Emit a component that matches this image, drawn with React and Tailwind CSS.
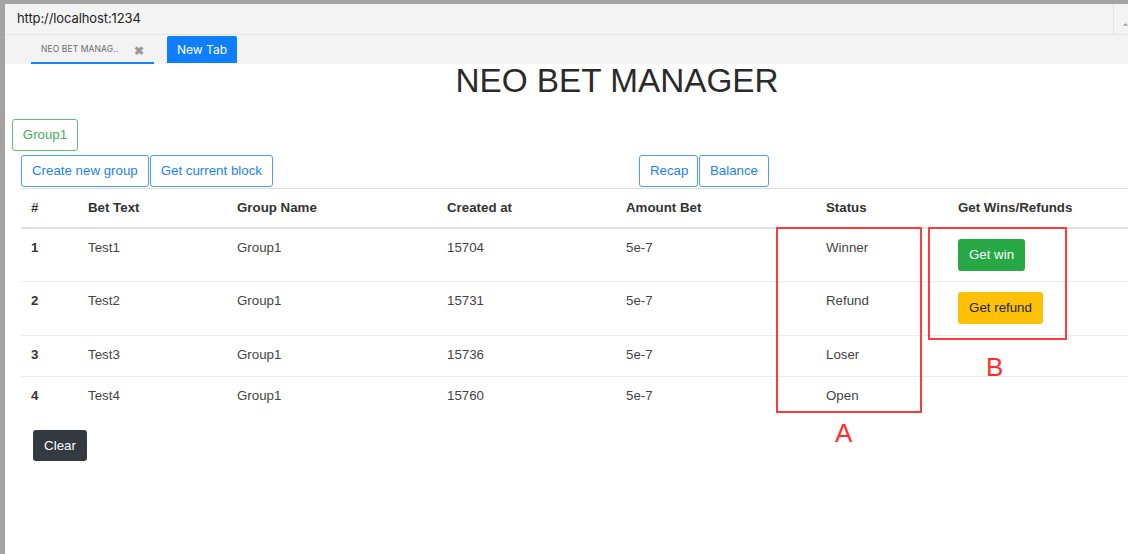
import React from "react";

const rows = [
  { n: 1, text: "Test1", group: "Group1", created: "15704", amount: "5e-7", status: "Winner", action: "win" },
  { n: 2, text: "Test2", group: "Group1", created: "15731", amount: "5e-7", status: "Refund", action: "refund" },
  { n: 3, text: "Test3", group: "Group1", created: "15736", amount: "5e-7", status: "Loser", action: null },
  { n: 4, text: "Test4", group: "Group1", created: "15760", amount: "5e-7", status: "Open", action: null },
];

const outlineBlue =
  "h-[32px] px-[10px] border border-[#4a9dff] text-[#1a82fb] rounded-[3px] bg-white text-[13.3px] leading-[20px]";

export default function App() {
  return (
    <div
      className="relative w-[1128px] h-[554px] overflow-hidden bg-white border-t-[4px] border-l-[5px] border-[#a3a3a3]"
      style={{ fontFamily: '"Liberation Sans", Arial, sans-serif' }}
    >
      {/* address bar */}
      <div
        className="flex items-center h-[31px] bg-[#f3f3f3] border-b border-[#e4e4e4] pl-[12px]"
        style={{ fontFamily: "Inter, sans-serif" }}
      >
        <span className="text-[13px] text-[#222] tracking-[-0.1px]">http://localhost:1234</span>
        <div className="ml-auto h-full w-[15px] border-l border-[#e2e2e2] flex items-center justify-end">
          <span className="text-[11px] text-[#777]">&#x2038;</span>
        </div>
      </div>
      {/* tab bar */}
      <div
        className="flex items-end h-[29px] bg-[#f3f3f3] pl-[26px]"
        style={{ fontFamily: "Inter, sans-serif" }}
      >
        <div className="relative w-[123px] h-[28px] flex items-center pl-[10px] border-b-[2px] border-[#1581ff]">
          <span className="text-[8.5px] text-[#6c6c6c] tracking-[0.1px]">NEO BET MANAG..</span>
          <span className="absolute left-[103px] top-[6px] text-[12px] font-bold text-[#9a9a9a]">&#x2716;</span>
        </div>
        <div className="ml-[13px] mb-[1px] w-[70px] h-[27px] bg-[#0f7efc] rounded-t-[2px] flex items-center justify-center text-white text-[12px]">
          New Tab
        </div>
      </div>

      {/* page */}
      <div className="w-[1224px] text-[#212529]">
        <h1 className="pt-[2px] text-center text-[33.3px] leading-[30px] font-normal text-[#2a2a2a]">NEO BET MANAGER</h1>
        <div className="mt-[23px] ml-[7px]">
          <button className="h-[32px] w-[66px] border border-[#62c075] text-[#45ad5c] rounded-[3px] text-[13.3px]">
            Group1
          </button>
        </div>
        <div className="mt-[4px] ml-[16px] flex">
          <button className={outlineBlue}>Create new group</button>
          <button className={outlineBlue + " ml-[1px]"}>Get current block</button>
          <div className="w-[366px]" />
          <button className={outlineBlue + " w-[59px] px-0"}>Recap</button>
          <button className={outlineBlue + " w-[70px] px-0 ml-[1px]"}>Balance</button>
        </div>

        <table className="mt-[1px] ml-[16px] w-[1192px] border-collapse text-[13.3px] leading-[20px] table-fixed">
          <colgroup>
            <col className="w-[57px]" />
            <col className="w-[149px]" />
            <col className="w-[210px]" />
            <col className="w-[179px]" />
            <col className="w-[200px]" />
            <col className="w-[132px]" />
            <col />
          </colgroup>
          <thead>
            <tr className="border-t border-b-[2px] border-[#dee2e6]">
              {["#", "Bet Text", "Group Name", "Created at", "Amount Bet", "Status", "Get Wins/Refunds"].map((h) => (
                <th key={h} className="text-left font-bold px-[10px] pt-[9px] pb-[9px] align-top text-[#333]">
                  {h}
                </th>
              ))}
            </tr>
          </thead>
          <tbody>
            {rows.map((r, i) => {
              const pad = i === 0 ? "px-[10px] pt-[9px] pb-[10px] align-top" : "px-[10px] pt-[9px] pb-[11px] align-top";
              return (
                <tr key={r.n} className={i === 0 ? "" : "border-t border-[#e9ecef]"}>
                  <td className={pad + " font-bold text-[#333]"}>{r.n}</td>
                  <td className={pad + " text-[#444]"}>{r.text}</td>
                  <td className={pad + " text-[#444]"}>{r.group}</td>
                  <td className={pad + " text-[#444]"}>{r.created}</td>
                  <td className={pad + " text-[#444]"}>{r.amount}</td>
                  <td className={pad + " text-[#444]"}>{r.status}</td>
                  <td className={pad}>
                    {r.action === "win" && (
                      <button className="mt-[1px] h-[32px] w-[67px] bg-[#28a745] text-white rounded-[3px] text-[13.3px]">
                        Get win
                      </button>
                    )}
                    {r.action === "refund" && (
                      <button className="mt-[1px] h-[32px] w-[85px] bg-[#ffc107] text-[#212529] rounded-[3px] text-[13.3px]">
                        Get refund
                      </button>
                    )}
                  </td>
                </tr>
              );
            })}
          </tbody>
        </table>

        <button className="mt-[13px] ml-[28px] h-[31px] w-[54px] bg-[#343a40] text-white rounded-[3px] text-[13.3px]">
          Clear
        </button>
      </div>

      {/* annotations */}
      <div className="absolute left-[771px] top-[223px] w-[146px] h-[186px] border-[2px] border-[#ff3b3b]" />
      <div className="absolute left-[923px] top-[223px] w-[139px] h-[113px] border-[2px] border-[#ff3b3b]" />
      <div className="absolute left-[830px] top-[414px] text-[26px] leading-[30px] text-[#ff2e2e]">A</div>
      <div className="absolute left-[981px] top-[348px] text-[26px] leading-[30px] text-[#ff2e2e]">B</div>
    </div>
  );
}
